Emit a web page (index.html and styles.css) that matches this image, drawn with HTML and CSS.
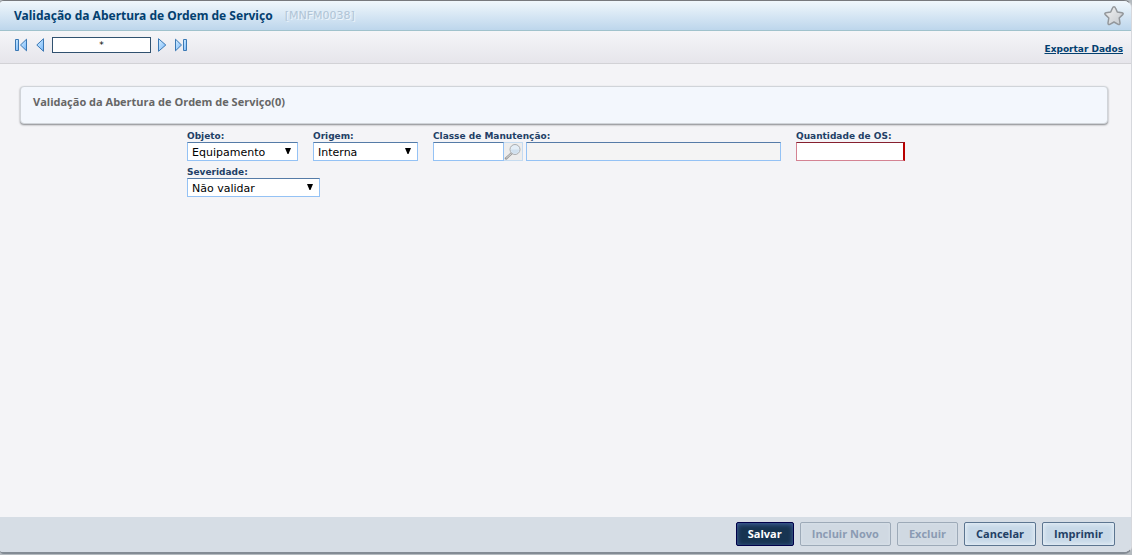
FILE: index.html
```html
<!DOCTYPE html>
<html lang="pt-BR">
<head>
<meta charset="utf-8">
<title>Validação da Abertura de Ordem de Serviço</title>
<link rel="stylesheet" href="styles.css">
</head>
<body>
<div class="window">
  <header class="titlebar">
    <h1 class="title">Validação da Abertura de Ordem de Serviço</h1>
    <span class="code">[MNFM0038]</span>
    <button class="icon-button favorite" type="button" aria-label="Favorito">
      <svg width="22" height="22" viewBox="0 0 22 22"><defs><linearGradient id="silver" x1="0" y1="0" x2="1" y2="1"><stop offset="0" stop-color="#f4f4f4"/><stop offset="1" stop-color="#c3c8cd"/></linearGradient></defs><path d="M11 1.8 Q12 1.8 12.5 3 L14.3 7 L19 7.7 Q21 8.2 19.7 9.6 L16.2 13 L17 18 Q17 20.2 15.2 19.3 L11 17 L6.8 19.3 Q5 20.2 5 18 L5.8 13 L2.3 9.6 Q1 8.2 3 7.7 L7.7 7 L9.5 3 Q10 1.8 11 1.8 Z" fill="url(#silver)" stroke="#93979b" stroke-width="1.5" stroke-linejoin="round"/></svg>
    </button>
  </header>
  <nav class="toolbar">
    <svg class="defs" width="0" height="0"><defs><linearGradient id="blue" x1="0" y1="0" x2="1" y2="1"><stop offset="0" stop-color="#d9f0ff"/><stop offset="1" stop-color="#72b5fa"/></linearGradient></defs></svg>
    <button class="icon-button" type="button" aria-label="Primeiro"><svg width="13" height="14" viewBox="0 0 13 14" fill="url(#blue)" stroke="#3a78b4"><path d="M.5 1.5h3v11h-3z"/><path d="M11.5 1.2v11.6L5.5 7z"/></svg></button>
    <button class="icon-button previous" type="button" aria-label="Anterior"><svg width="9" height="14" viewBox="0 0 9 14" fill="url(#blue)" stroke="#3a78b4"><path d="M7.5.7v12.6L.8 7z"/></svg></button>
    <input class="record" type="text" value="*" aria-label="Registro">
    <button class="icon-button" type="button" aria-label="Próximo"><svg width="9" height="14" viewBox="0 0 9 14" fill="url(#blue)" stroke="#3a78b4"><path d="M.5.7v12.6L7.8 7z"/></svg></button>
    <button class="icon-button last" type="button" aria-label="Último"><svg width="13" height="14" viewBox="0 0 13 14" fill="url(#blue)" stroke="#3a78b4"><path d="M8.5 1.5h3v11h-3z"/><path d="M.5 1.2v11.6L6.5 7z"/></svg></button>
    <a class="export" href="#">Exportar Dados</a>
  </nav>
  <main class="content">
    <h2 class="panel">Validação da Abertura de Ordem de Serviço(0)</h2>
    <form class="form" id="rule-form">
      <div class="row">
        <div class="field object">
          <label for="objeto">Objeto:</label>
          <div class="select"><select id="objeto"><option>Equipamento</option></select><svg width="6" height="6" viewBox="0 0 6 6"><path d="M0 0h6L3.5 6h-1z"/></svg></div>
        </div>
        <div class="field origin">
          <label for="origem">Origem:</label>
          <div class="select"><select id="origem"><option>Interna</option></select><svg width="6" height="6" viewBox="0 0 6 6"><path d="M0 0h6L3.5 6h-1z"/></svg></div>
        </div>
        <div class="field class-field">
          <label for="classe">Classe de Manutenção:</label>
          <div class="lookup">
            <input class="lookup-code" id="classe" type="text">
            <button class="search" type="button" aria-label="Pesquisar"><svg width="18" height="17" viewBox="0 0 18 17"><path d="M7.8 10.2L2 15.5" stroke="#999" stroke-width="2.5" stroke-linecap="round"/><path d="M7.6 10.3L2.2 15.2" stroke="#ddd" stroke-width="1"/><circle cx="11" cy="6.5" r="5" fill="#e4eef7" stroke="#aaadb0"/><path d="M7 6.5h8a4 4 0 0 1-8 0" fill="#d0e0ee"/></svg></button>
            <input class="lookup-name" type="text" readonly aria-label="Descrição da classe">
          </div>
        </div>
        <div class="field quantity">
          <label for="quantidade">Quantidade de OS:</label>
          <input class="required" id="quantidade" type="text" required>
        </div>
      </div>
      <div class="row">
        <div class="field severity">
          <label for="severidade">Severidade:</label>
          <div class="select"><select id="severidade"><option>Não validar</option></select><svg width="6" height="6" viewBox="0 0 6 6"><path d="M0 0h6L3.5 6h-1z"/></svg></div>
        </div>
      </div>
    </form>
  </main>
  <footer class="actions">
    <button class="action primary" type="submit" form="rule-form">Salvar</button>
    <button class="action" type="button" disabled>Incluir Novo</button>
    <button class="action" type="button" disabled>Excluir</button>
    <button class="action" type="button">Cancelar</button>
    <button class="action" type="button">Imprimir</button>
  </footer>
</div>
</body>
</html>
```
FILE: styles.css
```css
* { box-sizing: border-box; }

body {
  margin: 0;
  background: #b4babf;
  font-family: "DejaVu Sans", Verdana, sans-serif;
  font-size: 9px;
  line-height: 12px;
}

input, select, button { margin: 0; font: inherit; }

.window {
  display: flex;
  flex-direction: column;
  min-height: calc(100vh - 1px);
  border-top: 1px solid #77797d;
  border-right: 1px solid #d6d8dd;
  border-bottom: 2px solid #838b94;
  border-radius: 4px 8px 8px 4px;
  background: #f4f4f7;
  overflow: hidden;
}

.titlebar {
  display: flex;
  align-items: center;
  gap: 12px;
  height: 30px;
  padding: 0 6px 0 14px;
  border-bottom: 1px solid #a0c2cc;
  background: linear-gradient(#f0f7fc, #bdd6ec);
}

.title {
  margin: 0;
  color: #03406f;
  font-family: "Noto Sans", Verdana, sans-serif;
  font-size: 12px;
  font-weight: bold;
}

.code {
  color: #b0c4d6;
  font-size: 11px;
  text-shadow: 1px 1px 0 #eef5fa;
}

.icon-button {
  display: flex;
  padding: 0;
  border: 0;
  background: none;
}

.favorite { margin-left: auto; }

.toolbar {
  display: flex;
  align-items: center;
  height: 33px;
  padding: 0 8px 4px 15px;
  border-bottom: 1px solid #d2d2d6;
  background: linear-gradient(#f5f5f8, #e6e5eb);
}

.defs { position: absolute; }

.previous { margin-left: 8px; }
.last { margin-left: 8px; }

.record {
  width: 99px;
  height: 16px;
  margin: 0 7px;
  padding: 0;
  border: 1px solid #30516f;
  background: #fff;
  text-align: center;
}

.export {
  align-self: flex-end;
  margin: 0 0 4px auto;
  color: #03406f;
  font-weight: bold;
}

.content {
  flex: 1;
  padding: 22px 23px 0 20px;
}

.panel {
  height: 38px;
  margin: 0;
  padding: 9px 12px;
  border: 1px solid #d0d4d9;
  border-radius: 4px;
  background: #f3f7fd;
  box-shadow: 0 1px 2px #85878b;
  color: #666;
  font-family: "Open Sans", Verdana, sans-serif;
  font-size: 11px;
}

.form {
  display: grid;
  padding: 6px 0 0 167px;
}

.row {
  display: flex;
  gap: 15px;
}

.field {
  display: flex;
  flex-direction: column;
  height: 36px;
  color: #223f66;
  font-weight: bold;
}

.field input,
.select select {
  width: 100%;
  height: 19px;
  border: 1px solid #94c2f5;
  border-top-color: #557ba7;
  border-radius: 0;
  background: #fff;
  color: #000;
  font-size: 11px;
  font-weight: normal;
}

.select { position: relative; }

.select select {
  display: block;
  padding: 2px 4px 0;
  appearance: none;
}

.select svg {
  position: absolute;
  top: 6px;
  right: 7px;
  pointer-events: none;
}

.object { width: 111px; }
.origin { width: 105px; }
.class-field { width: 348px; }
.quantity { width: 109px; }
.severity { width: 133px; }

.lookup { display: flex; }

.lookup .lookup-code { width: 71px; }

.search {
  width: 19px;
  height: 19px;
  margin-right: 3px;
  padding: 0;
  border: 1px solid #c5dbf0;
  border-left: 0;
  background: #ededed;
}

.search svg { display: block; }

.lookup .lookup-name {
  flex: 1;
  width: 0;
  background: #f4f4f4;
}

.field .required {
  border: 1px solid #d48393;
  border-top-color: #86202f;
  border-right: 2px solid #b80000;
}

.actions {
  display: flex;
  justify-content: flex-end;
  gap: 6px;
  height: 35px;
  padding: 5px 16px 0;
  background: #d6dde5;
}

.action {
  height: 24px;
  padding: 0 11px;
  border: 1px solid #5c7590;
  border-radius: 2px;
  background: #c8d9e8;
  box-shadow: inset 0 0 4px 1px #e8f1f8;
  color: #233f65;
  font-family: "Open Sans", Verdana, sans-serif;
  font-size: 11px;
  font-weight: bold;
}

.action:disabled {
  border-color: #9daab8;
  background: #d0d9e2;
  box-shadow: inset 0 0 3px #dde4eb;
  color: #8b9bb3;
}

.primary {
  border-color: #000049;
  background: #173451;
  box-shadow: inset 0 1px 5px #4868a8;
  color: #fff;
}
```
